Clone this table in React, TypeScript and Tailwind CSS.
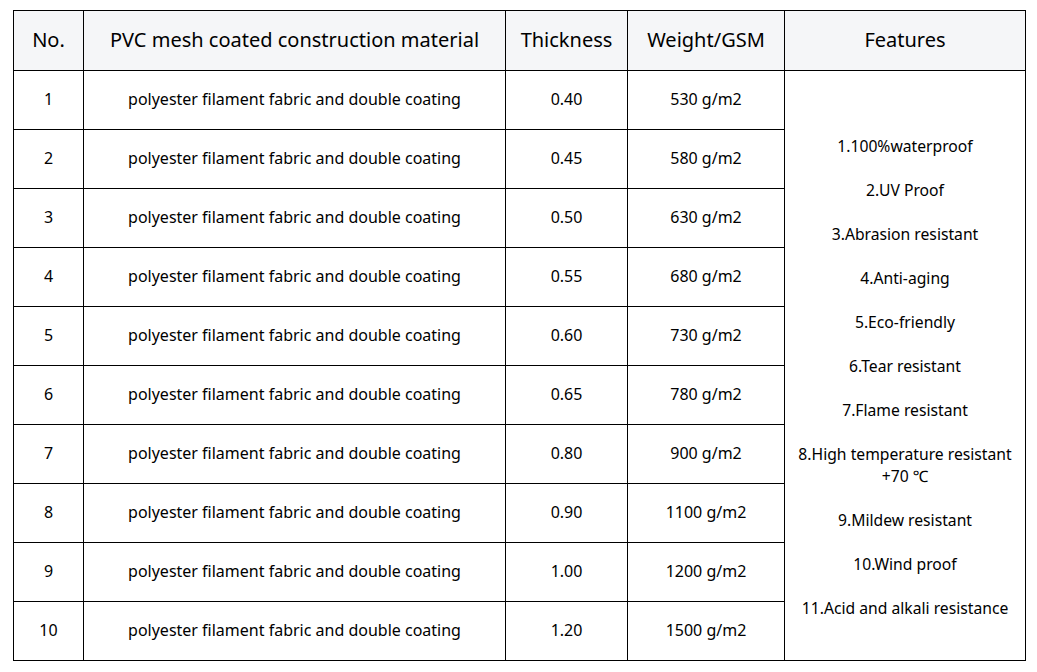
import React from "react";

const rows = [
  ["1", "0.40", "530 g/m2"],
  ["2", "0.45", "580 g/m2"],
  ["3", "0.50", "630 g/m2"],
  ["4", "0.55", "680 g/m2"],
  ["5", "0.60", "730 g/m2"],
  ["6", "0.65", "780 g/m2"],
  ["7", "0.80", "900 g/m2"],
  ["8", "0.90", "1100 g/m2"],
  ["9", "1.00", "1200 g/m2"],
  ["10", "1.20", "1500 g/m2"],
];

const features: string[][] = [
  ["1.100%waterproof"],
  ["2.UV Proof"],
  ["3.Abrasion resistant"],
  ["4.Anti-aging"],
  ["5.Eco-friendly"],
  ["6.Tear resistant"],
  ["7.Flame resistant"],
  ["8.High temperature resistant", "+70 ℃"],
  ["9.Mildew resistant"],
  ["10.Wind proof"],
  ["11.Acid and alkali resistance"],
];

export default function App() {
  return (
    <div className="w-[1037px] h-[672px] bg-white pt-[10px] pl-[13px] text-black" style={{ fontFamily: '"Noto Sans", "Open Sans", sans-serif' }}>
      <table className="border-collapse table-fixed w-[1012px]">
        <colgroup>
          <col className="w-[70px]" />
          <col className="w-[422px]" />
          <col className="w-[122px]" />
          <col className="w-[157px]" />
          <col className="w-[241px]" />
        </colgroup>
        <thead>
          <tr className="h-[60px] bg-[#f5f6f8] text-[20px]">
            <th className="border border-black font-normal pb-[2px]">No.</th>
            <th className="border border-black font-normal pb-[2px]">PVC mesh coated construction material</th>
            <th className="border border-black font-normal pb-[2px]">Thickness</th>
            <th className="border border-black font-normal pb-[2px]">Weight/GSM</th>
            <th className="border border-black font-normal pb-[2px]">Features</th>
          </tr>
        </thead>
        <tbody className="text-[16px] leading-[22px]">
          {rows.map((r, i) => (
            <tr key={r[0]} className="h-[59px]">
              <td className="border border-black text-center pb-[2px]">{r[0]}</td>
              <td className="border border-black text-center pb-[2px]">polyester filament fabric and double coating</td>
              <td className="border border-black text-center pb-[2px]">{r[1]}</td>
              <td className="border border-black text-center pb-[2px]">{r[2]}</td>
              {i === 0 && (
                <td rowSpan={10} className="border border-black text-center align-middle text-[15.7px]">
                  <div className="flex flex-col gap-[22px] pt-[22px] leading-[22px]">
                    {features.map((f) => (
                      <div key={f[0]}>
                        {f.map((line) => (
                          <div key={line}>{line}</div>
                        ))}
                      </div>
                    ))}
                  </div>
                </td>
              )}
            </tr>
          ))}
        </tbody>
      </table>
    </div>
  );
}
